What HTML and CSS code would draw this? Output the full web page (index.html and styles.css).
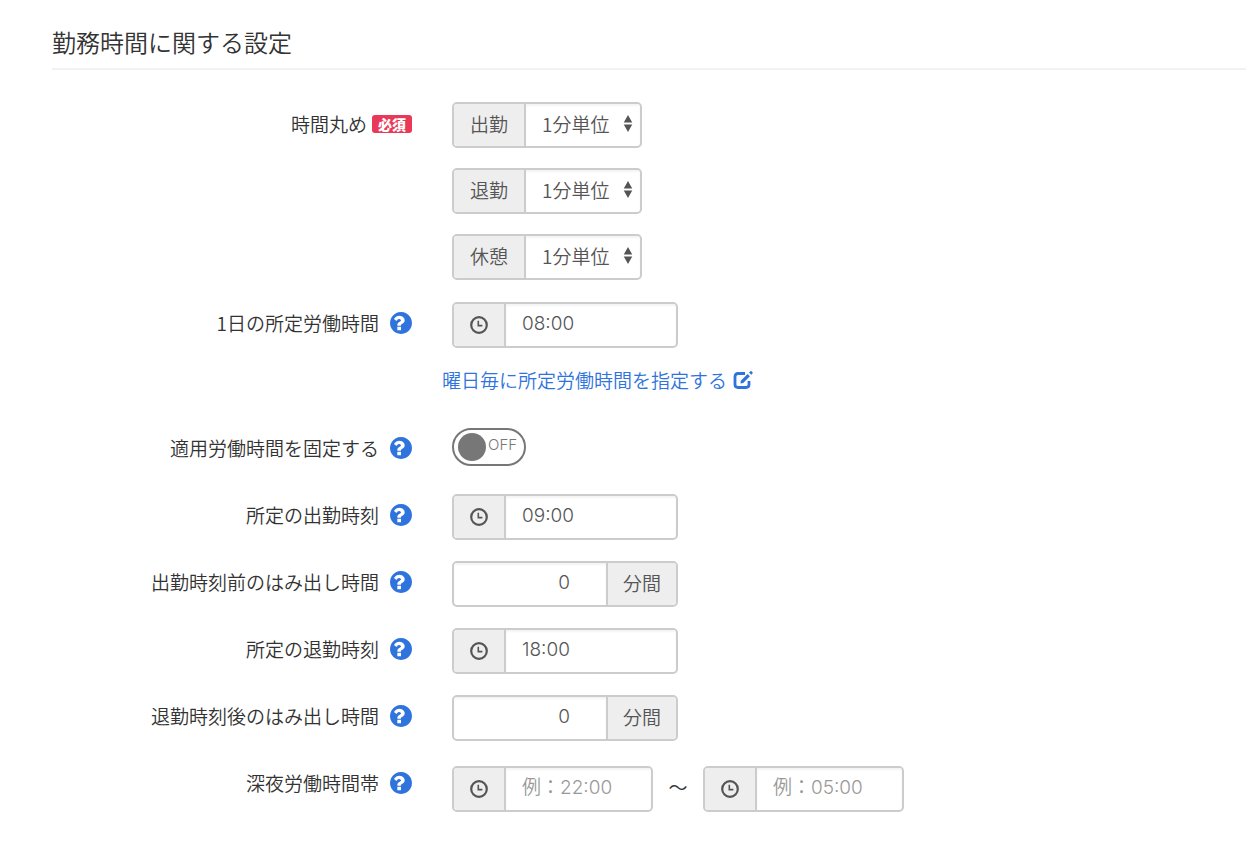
FILE: index.html
```
<!DOCTYPE html>
<html lang="ja">
<head>
<meta charset="utf-8">
<title>勤務時間に関する設定</title>
<link rel="stylesheet" href="styles.css">
</head>
<body>
<svg class="sprite" aria-hidden="true">
  <symbol id="help" viewBox="128 128 1536 1536"><path fill="currentColor" d="M896 1376v-192q0-14-9-23t-23-9h-192q-14 0-23 9t-9 23v192q0 14 9 23t23 9h192q14 0 23-9t9-23zm256-672q0-88-55.500-163t-138.500-116-170-41q-243 0-371 213-15 24 8 42l132 100q7 6 19 6 16 0 25-12 53-68 86-92 34-24 86-24 48 0 85.500 26t37.500 59q0 38-20 61t-68 45q-63 28-115.500 86.500t-52.500 125.500v36q0 14 9 23t23 9h192q14 0 23-9t9-23q0-19 21.500-49.500t54.500-49.500q32-18 49-28.500t46-35 44.500-48 28-60.500 12.500-81zm512 192q0 209-103 385.500t-279.500 279.500-385.500 103-385.500-103-279.500-279.500-103-385.500 103-385.500 279.500-279.500 385.500-103 385.500 103 279.500 279.500 103 385.500z"/></symbol>
  <symbol id="clock" viewBox="0 0 18 18"><circle cx="9" cy="9" r="7.800" fill="none" stroke="currentColor" stroke-width="2.200"/><path d="M8.300 4.700V9.600H12.400" fill="none" stroke="currentColor" stroke-width="1.600"/></symbol>
  <symbol id="arrows" viewBox="0 0 10 18"><path fill="currentColor" d="M5 0L9.500 8H.5zM5 18L.5 10H9.500z"/></symbol>
  <symbol id="edit" viewBox="0 0 20 20"><path d="M12 3.500H5Q2 3.500 2 6.500V14.500Q2 17.500 5 17.500H13Q16 17.500 16 14.500V11" fill="none" stroke="currentColor" stroke-width="2.800"/><path d="M7.500 13.500L7.800 10.800 14.600 4 16.900 6.300 10.200 13zM16 2.600L17.400 1.200Q18 .700 18.600 1.300L19.500 2.200Q20 2.800 19.500 3.400L18.200 4.800z" fill="currentColor"/></symbol>
</svg>
<main class="page">
  <h1 class="title">勤務時間に関する設定</h1>
  <form class="form">
    <div class="row row-rounding">
      <div class="label"><label for="round-in">時間丸め</label><span class="badge">必須</span></div>
      <div class="stack">
        <div class="group select-group"><label class="addon" for="round-in">出勤</label><div class="select-box"><select id="round-in"><option>1分単位</option></select><svg class="arrows"><use href="#arrows"/></svg></div></div>
        <div class="group select-group"><label class="addon" for="round-out">退勤</label><div class="select-box"><select id="round-out"><option>1分単位</option></select><svg class="arrows"><use href="#arrows"/></svg></div></div>
        <div class="group select-group"><label class="addon" for="round-rest">休憩</label><div class="select-box"><select id="round-rest"><option>1分単位</option></select><svg class="arrows"><use href="#arrows"/></svg></div></div>
      </div>
    </div>
    <div class="row">
      <div class="label"><label for="daily">1日の所定労働時間</label><button type="button" class="help" aria-label="ヘルプ"><svg><use href="#help"/></svg></button></div>
      <div class="group"><span class="addon clock"><svg><use href="#clock"/></svg></span><input id="daily" type="text" value="08:00"></div>
    </div>
    <div class="row row-link">
      <a class="link" href="#">曜日毎に所定労働時間を指定する<svg><use href="#edit"/></svg></a>
    </div>
    <div class="row row-toggle">
      <div class="label"><label for="fixed">適用労働時間を固定する</label><button type="button" class="help" aria-label="ヘルプ"><svg><use href="#help"/></svg></button></div>
      <label class="switch"><input id="fixed" type="checkbox"><span class="knob"></span><span>OFF</span></label>
    </div>
    <div class="row">
      <div class="label"><label for="start">所定の出勤時刻</label><button type="button" class="help" aria-label="ヘルプ"><svg><use href="#help"/></svg></button></div>
      <div class="group"><span class="addon clock"><svg><use href="#clock"/></svg></span><input id="start" type="text" value="09:00"></div>
    </div>
    <div class="row">
      <div class="label"><label for="before">出勤時刻前のはみ出し時間</label><button type="button" class="help" aria-label="ヘルプ"><svg><use href="#help"/></svg></button></div>
      <div class="group"><input id="before" class="number" type="text" value="0"><span class="addon unit">分間</span></div>
    </div>
    <div class="row">
      <div class="label"><label for="end">所定の退勤時刻</label><button type="button" class="help" aria-label="ヘルプ"><svg><use href="#help"/></svg></button></div>
      <div class="group"><span class="addon clock"><svg><use href="#clock"/></svg></span><input id="end" type="text" value="18:00"></div>
    </div>
    <div class="row">
      <div class="label"><label for="after">退勤時刻後のはみ出し時間</label><button type="button" class="help" aria-label="ヘルプ"><svg><use href="#help"/></svg></button></div>
      <div class="group"><input id="after" class="number" type="text" value="0"><span class="addon unit">分間</span></div>
    </div>
    <div class="row row-night">
      <div class="label"><label for="night-from">深夜労働時間帯</label><button type="button" class="help" aria-label="ヘルプ"><svg><use href="#help"/></svg></button></div>
      <div class="range">
        <div class="group range-group"><span class="addon clock"><svg><use href="#clock"/></svg></span><input id="night-from" type="text" placeholder="例：22:00"></div>
        <span class="tilde">〜</span>
        <div class="group range-group"><span class="addon clock"><svg><use href="#clock"/></svg></span><input type="text" placeholder="例：05:00" aria-label="深夜労働時間帯の終了"></div>
      </div>
    </div>
  </form>
</main>
</body>
</html>
```
FILE: styles.css
```
* { box-sizing: border-box; }
body {
  margin: 0;
  background: #fff;
  color: #333;
  font: 350 19px/28px "Noto Sans CJK JP", sans-serif;
}
svg { display: block; }
.sprite { display: none; }
.page { padding: 24px 0 30px 52px; }
.title {
  margin: 0 0 32px;
  padding-bottom: 8px;
  border-bottom: 2px solid #f2f2f2;
  font-size: 24px;
  line-height: 36px;
  font-weight: 350;
}
.form { display: flex; flex-direction: column; gap: 21px; }
.row { display: grid; grid-template-columns: 360px 1fr; column-gap: 40px; align-items: center; }
.row-rounding { align-items: start; margin-bottom: 1px; }
.row-link { margin-top: -3px; padding-bottom: 9px; }
.row-toggle { min-height: 46px; margin-bottom: 3px; }
.row-night { margin-top: 4px; }
.label { display: flex; justify-content: flex-end; align-items: center; min-height: 44px; padding-bottom: 4px; }
.row-rounding .label { min-height: 46px; padding-bottom: 2px; }
.row-toggle .label { padding: 2px 0 0; }
.row-night .label { padding-bottom: 12px; }
.stack { display: flex; flex-direction: column; gap: 20px; }
.badge {
  margin-left: 5px;
  padding: 0 6px;
  border-radius: 3px;
  background: #e83a58;
  color: #fff;
  font-size: 14px;
  line-height: 18px;
  font-weight: 900;
}
.help {
  margin-left: 11px;
  padding: 0;
  border: 0;
  background: none;
  color: #2f74dd;
}
.help svg { width: 22px; height: 22px; }
.group {
  display: flex;
  width: 226px;
  height: 46px;
  border: 2px solid #ccc;
  border-radius: 5px;
  background: #fff;
  overflow: hidden;
  color: #555;
}
.select-group { width: 190px; }
.range-group { width: 201px; }
.addon {
  display: flex;
  flex: none;
  align-items: center;
  justify-content: center;
  width: 72px;
  padding-bottom: 2px;
  border-right: 2px solid #ccc;
  background: #eee;
}
.clock { width: 52px; padding: 0; }
.clock svg { width: 18px; height: 18px; }
.unit { width: 70px; border-right: 0; border-left: 2px solid #ccc; }
.select-box { position: relative; flex: 1; }
.arrows { position: absolute; top: 11px; right: 7px; width: 10px; height: 17px; pointer-events: none; }
select, input[type="text"] {
  width: 100%;
  min-width: 0;
  height: 100%;
  margin: 0;
  padding: 0 16px 4px;
  border: 0;
  border-radius: 0;
  background: none;
  box-shadow: inset 0 2px 2px #f4f4f4;
  color: #555;
  font: 350 19px/28px Inter, "Noto Sans CJK JP", sans-serif;
  appearance: none;
}
select { padding: 0 0 2px 16px; font-family: "Noto Sans CJK JP", sans-serif; }
input[type="text"]::placeholder { color: #999; opacity: 1; }
input.number { padding-right: 36px; text-align: right; }
.link {
  grid-column: 2;
  justify-self: start;
  display: flex;
  align-items: center;
  gap: 6px;
  margin-left: -10px;
  color: #2f74dd;
  text-decoration: none;
}
.link svg { width: 20px; height: 20px; }
.switch {
  display: flex;
  align-items: center;
  width: 74px;
  height: 38px;
  padding-left: 4px;
  border: 2px solid #777;
  border-radius: 19px;
  color: #777;
  font: 300 15px/28px Inter, sans-serif;
}
.switch span:last-child { margin-left: 2px; padding-bottom: 4px; }
.switch input { appearance: none; width: 0; height: 0; margin: 0; }
.knob { flex: none; width: 28px; height: 28px; border-radius: 50%; background: #777; }
.range { display: flex; align-items: center; }
.tilde { width: 50px; padding-bottom: 4px; text-align: center; }
```
